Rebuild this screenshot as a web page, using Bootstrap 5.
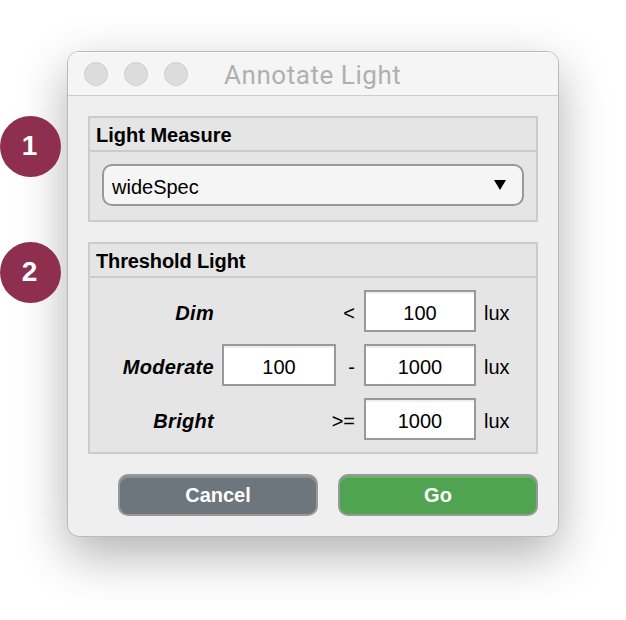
<!DOCTYPE html>
<html lang="en">
<head>
<meta charset="utf-8">
<meta name="viewport" content="width=device-width, initial-scale=1">
<title>Annotate Light</title>
<link href="https://cdn.jsdelivr.net/npm/bootstrap@5.3.0/dist/css/bootstrap.min.css" rel="stylesheet">
<style>
  body { font: 20px/24px "Liberation Sans", Arial, sans-serif; color: #000; background: #fff; height: 620px; overflow: hidden; }
  .steps { width: 67px; padding-top: 116px; gap: 65px; z-index: 1; }
  .step { width: 61px; height: 61px; background: #8f2f50; color: #fff; font-size: 28px; font-weight: 700; padding-right: 2px; padding-bottom: 2px; }
  .dialog { width: 492px; height: 486px; margin-top: 51px; background: #efefef; border: 1px solid #bababa; border-radius: 12px; box-shadow: 0 18px 50px rgba(0,0,0,.31); overflow: hidden; }
  .titlebar { height: 44px; background: #f5f5f5; border-bottom: 1px solid #cdcdcd; padding-left: 16px; box-shadow: inset 0 1px #fbfbfb; }
  .light { width: 24px; height: 24px; background: #dcdcdc; border: 1px solid #cecece; }
  .caption { font: 400 26px/30px Roboto, Inter, sans-serif; letter-spacing: .55px; color: #b0b0b0; margin-left: 36px; padding-top: 2px; white-space: nowrap; }
  .content { padding: 20px; gap: 20px; }
  .panel { background: #e5e5e5; border: 2px solid #cbcbcb; }
  .panel-title { height: 34px; border-bottom: 2px solid #cbcbcb; padding: 5px 6px 0; font-weight: 700; }
  .second .panel-title { letter-spacing: -.12px; }
  .measure { height: 42px; margin: 12px 12px 14px; padding: 4px 16px 0 8px; background: #f5f5f5; border: 2px solid #999; border-radius: 10px; }
  .measure svg { margin-top: -4px; }
  .levels { display: grid; grid-template-columns: 132px 114px 28px 112px auto; grid-auto-rows: 42px; row-gap: 12px; align-items: center; padding: 12px 0; }
  .levels > * { padding-top: 4px; }
  .level { font-weight: 700; font-style: italic; text-align: right; padding-right: 8px; letter-spacing: .3px; }
  .levels .value { grid-column: 4; height: 42px; width: 100%; border: 2px solid #999; border-radius: 0; background: #fff; box-shadow: inset 0 2px #efefef; padding: 4px 0 0; font-size: 20px; line-height: 24px; color: #000; text-align: center; }
  .levels .from { grid-column: 2; }
  .op { grid-column: 2 / 4; text-align: right; padding-right: 9px; }
  .dash { grid-column: 3; }
  .unit { padding-left: 8px; }
  .actions { gap: 20px; }
  .action { width: 200px; height: 42px; border: 2px solid #999; border-radius: 10px; color: #fff; font-size: 20px; line-height: 24px; font-weight: 700; padding: 0 0 1px; }
  .cancel { background: #6d757d; box-shadow: inset 0 2px #899096; }
  .go { background: #50a351; box-shadow: inset 0 2px #69b16b; }
</style>
</head>
<body class="d-flex align-items-start">
  <aside class="steps d-flex flex-column flex-shrink-0">
    <div class="step rounded-circle d-flex align-items-center justify-content-center">1</div>
    <div class="step rounded-circle d-flex align-items-center justify-content-center">2</div>
  </aside>
  <main class="dialog flex-shrink-0">
    <header class="titlebar d-flex align-items-center">
      <div class="d-flex gap-3">
        <span class="light rounded-circle"></span>
        <span class="light rounded-circle"></span>
        <span class="light rounded-circle"></span>
      </div>
      <div class="caption">Annotate Light</div>
    </header>
    <div class="content d-flex flex-column">
      <section class="panel">
        <div class="panel-title">Light Measure</div>
        <div class="measure d-flex align-items-center justify-content-between">
          <span>wideSpec</span>
          <svg width="12" height="10" viewBox="0 0 12 10"><path d="M0 0H12L6 10Z"/></svg>
        </div>
      </section>
      <section class="panel second">
        <div class="panel-title">Threshold Light</div>
        <div class="levels">
          <div class="level">Dim</div><div class="op">&lt;</div>
          <input class="value form-control" type="text" value="100" aria-label="Dim below"><div class="unit">lux</div>
          <div class="level">Moderate</div>
          <input class="value from form-control" type="text" value="100" aria-label="Moderate from"><div class="op dash">-</div>
          <input class="value form-control" type="text" value="1000" aria-label="Moderate to"><div class="unit">lux</div>
          <div class="level">Bright</div><div class="op">&gt;=</div>
          <input class="value form-control" type="text" value="1000" aria-label="Bright from"><div class="unit">lux</div>
        </div>
      </section>
      <div class="actions d-flex justify-content-end">
        <button class="btn action cancel" type="button">Cancel</button>
        <button class="btn action go" type="button">Go</button>
      </div>
    </div>
  </main>
<script src="https://cdn.jsdelivr.net/npm/bootstrap@5.3.0/dist/js/bootstrap.bundle.min.js"></script>
</body>
</html>
